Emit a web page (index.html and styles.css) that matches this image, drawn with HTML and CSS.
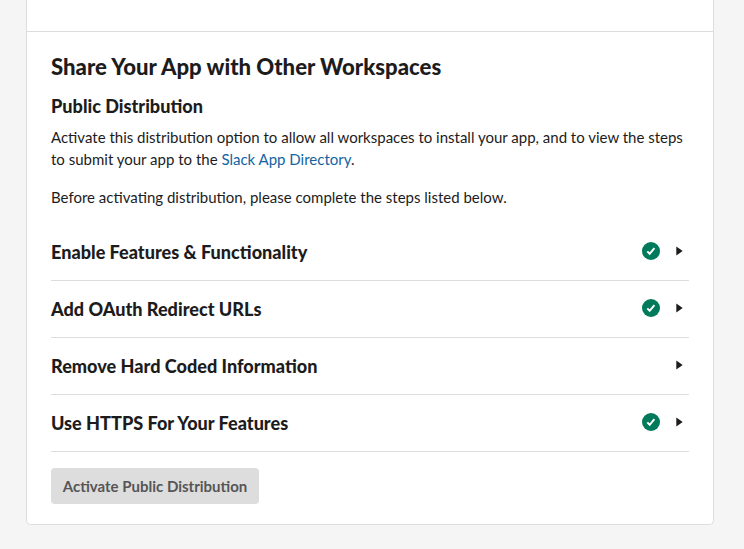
FILE: index.html
```
<!DOCTYPE html>
<html lang="en">
<head>
<meta charset="utf-8">
<title>Share Your App</title>
<link rel="stylesheet" href="styles.css">
</head>
<body>
<main class="card">
  <div class="previous"></div>
  <section class="share">
    <h2>Share Your App with Other Workspaces</h2>
    <h3>Public Distribution</h3>
    <p class="intro">Activate this distribution option to allow all workspaces to install your app, and to view the steps<br>to submit your app to the <a>Slack App Directory</a>.</p>
    <p class="before">Before activating distribution, please complete the steps listed below.</p>
    <ul class="steps">
      <li><h4>Enable Features &amp; Functionality</h4><svg class="check" viewBox="0 0 18 18"><circle cx="9" cy="9" r="9"/><path d="M5.3 9.4l2.4 2.4 4.7-5.6"/></svg><svg class="caret" viewBox="0 0 7 10"><path d="M.3.5 6.7 5 .3 9.5z"/></svg></li>
      <li><h4>Add OAuth Redirect URLs</h4><svg class="check" viewBox="0 0 18 18"><circle cx="9" cy="9" r="9"/><path d="M5.3 9.4l2.4 2.4 4.7-5.6"/></svg><svg class="caret" viewBox="0 0 7 10"><path d="M.3.5 6.7 5 .3 9.5z"/></svg></li>
      <li><h4>Remove Hard Coded Information</h4><svg class="caret" viewBox="0 0 7 10"><path d="M.3.5 6.7 5 .3 9.5z"/></svg></li>
      <li><h4>Use HTTPS For Your Features</h4><svg class="check" viewBox="0 0 18 18"><circle cx="9" cy="9" r="9"/><path d="M5.3 9.4l2.4 2.4 4.7-5.6"/></svg><svg class="caret" viewBox="0 0 7 10"><path d="M.3.5 6.7 5 .3 9.5z"/></svg></li>
    </ul>
    <button class="activate" disabled>Activate Public Distribution</button>
  </section>
</main>
</body>
</html>
```
FILE: styles.css
```
* { box-sizing: border-box; }
body { margin: 0; background: #f5f5f5; color: #1d1c1d; font: 15px/22px Lato, sans-serif; }
h2, h3, h4, p, ul { margin: 0; padding: 0; }
.card { width: 688px; height: 525px; margin-left: 26px; background: #fff; border: 1px solid #ddd; border-top: 0; border-radius: 0 0 5px 5px; }
.previous { height: 32px; border-bottom: 1px solid #ddd; }
.share { padding: 20px 24px 0; }
h2 { font-size: 22.13px; line-height: 30px; font-weight: 900; }
h3 { margin-top: 12px; font-size: 18.09px; line-height: 24px; font-weight: 900; }
.intro { margin-top: 8px; }
.before { margin-top: 16px; }
a { color: #1264a3; }
.steps { list-style: none; margin-top: 16px; }
.steps li { display: flex; align-items: center; height: 57px; border-bottom: 1px solid #ddd; }
h4 { flex: 1; font-size: 18.09px; line-height: 24px; font-weight: 900; }
.check { width: 18px; height: 18px; margin-bottom: 2px; fill: #007a5a; }
.check path { fill: none; stroke: #fff; stroke-width: 2; }
.caret { width: 7px; height: 10px; margin: 0 6.5px 2px 16px; fill: #1d1c1d; }
.activate { display: block; width: 208px; height: 36px; margin-top: 16px; padding: 0; border: 0; border-radius: 4px; background: #ddd; color: #565556; font: 700 15px/22px Lato, sans-serif; }
```
